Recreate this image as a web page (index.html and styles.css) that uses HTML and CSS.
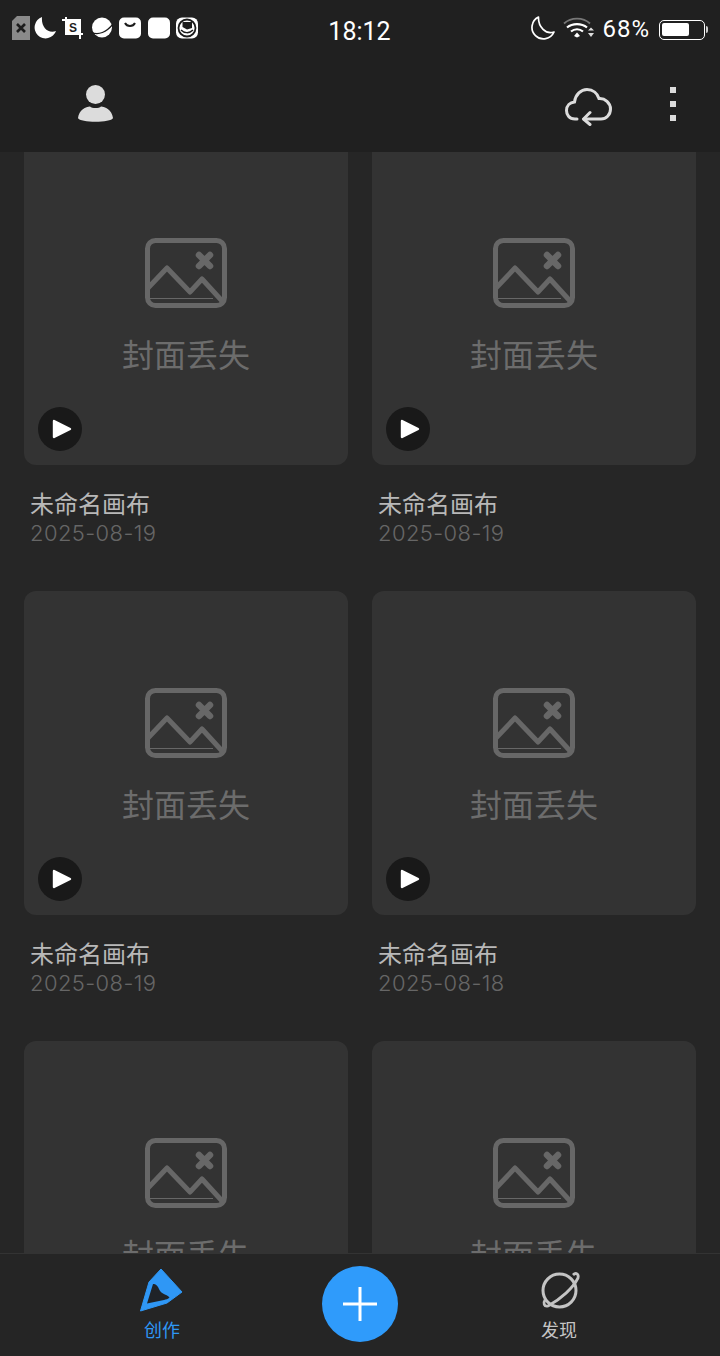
FILE: index.html
```html
<!DOCTYPE html>
<html lang="zh">
<head>
<meta charset="utf-8">
<title>画布</title>
<link rel="stylesheet" href="styles.css">
</head>
<body>
<svg class="defs" width="0" height="0" aria-hidden="true">
  <symbol id="cover" viewBox="0 0 82 70">
    <rect x="2.500" y="2.500" width="77" height="65" rx="8" fill="none" stroke="currentColor" stroke-width="5"/>
    <path d="M3 50 L22 30 L45 54 L57 41 L78 64" fill="none" stroke="currentColor" stroke-width="5" stroke-linejoin="round"/>
    <path d="M4 60.500 H68" stroke="currentColor" stroke-width="1.200"/>
    <path d="M54 17 L65 28 M65 17 L54 28" stroke="currentColor" stroke-width="6.500" stroke-linecap="round"/>
  </symbol>
  <symbol id="play" viewBox="0 0 44 44">
    <circle cx="22" cy="22" r="22" fill="#191919"/>
    <path d="M16 14 L32 22 L16 30 Z" fill="#fff" stroke="#fff" stroke-width="2.400" stroke-linejoin="round"/>
  </symbol>
</svg>

<div class="app">
  <header class="top">
    <div class="status">
      <div class="status-left">
        <svg class="ic-sim" viewBox="0 0 18 24"><path d="M5 0H18V24H0V5Z" fill="#8a8a8a"/><path d="M5 8L13 16M13 8L5 16" stroke="#1c1c1c" stroke-width="2.600"/></svg>
        <svg class="ic-s" viewBox="0 0 22 22"><path d="M8 0A11 11 0 1 0 22 14C14 17 7 10 8 0Z" fill="#fff"/></svg>
        <svg class="ic-s" viewBox="0 0 22 22"><path d="M4 0V17H21M0 3H18V22" fill="none" stroke="#fff" stroke-width="2"/><rect x="5" y="4" width="12" height="12" fill="#fff"/><text x="11" y="15" class="ic-letter">S</text></svg>
        <svg class="ic-s" viewBox="0 0 22 22"><circle cx="11" cy="10.500" r="10" fill="#fff"/><path d="M0 15C7 19 16 15 22 7" fill="none" stroke="#1c1c1c" stroke-width="1.300"/></svg>
        <svg class="ic-s" viewBox="0 0 22 22"><rect width="22" height="21" y="0.500" rx="5" fill="#fff"/><path d="M6 6C8 10 14 10 16 6" fill="none" stroke="#1c1c1c" stroke-width="2"/></svg>
        <svg class="ic-s" viewBox="0 0 22 22"><rect width="22" height="21" y="0.500" rx="5" fill="#fff"/></svg>
        <svg class="ic-s" viewBox="0 0 22 22"><rect width="22" height="21" y="0.500" rx="6" fill="#fff"/><circle cx="11" cy="11" r="8.500" fill="none" stroke="#1c1c1c" stroke-width="1.800"/><path d="M6.500 5H16V11L11 12.500L6.500 10Z" fill="#1c1c1c"/><path d="M5 13C8 16 13 17 17 13" fill="none" stroke="#1c1c1c" stroke-width="1.500"/></svg>
      </div>
      <div class="clock">18:12</div>
      <div class="status-right">
        <svg class="ic-moon" viewBox="0 0 24 24"><path d="M7.500 1A11.500 11.500 0 1 0 23 16C15 19 7 11 7.500 1Z" fill="none" stroke="#fff" stroke-width="1.700" stroke-linejoin="round"/></svg>
        <svg class="ic-wifi" viewBox="0 0 32 22">
          <path d="M1 6.500C8 0 20 0 27 6.500" fill="none" stroke="#777" stroke-width="1.800"/>
          <path d="M4 10.500C9.500 6 18.500 6 24 10.500" fill="none" stroke="#fff" stroke-width="2.200"/>
          <path d="M8 14.500C11.500 11.500 16.500 11.500 20 14.500" fill="none" stroke="#fff" stroke-width="2.200"/>
          <path d="M11 19L14 15.500L17 19L14 20.500Z" fill="#fff"/>
          <path d="M25 13.500L28 10.500L31 13.500ZM25 16L31 16L28 20Z" fill="#ddd"/>
        </svg>
        <span class="pct">68%</span>
        <span class="battery"><span class="battery-fill"></span></span>
      </div>
    </div>
    <nav class="toolbar">
      <svg class="ic-user" viewBox="0 0 35 39"><circle cx="17.500" cy="9.500" r="9.500" fill="#dcdcdc"/><path d="M0 33C1 25 8 21.500 12 21.500C14 23.500 21 23.500 23 21.500C27 21.500 34 25 35 33C33 38 2 38 0 33Z" fill="#dcdcdc"/></svg>
      <div class="toolbar-right">
        <svg class="ic-cloud" viewBox="0 0 47 38"><path d="M12 31H10C4 31 1.500 26.500 1.500 22.500C1.500 17.500 5 14.500 9.500 14C10.500 6.500 16 1.500 22 1.500C28 1.500 32.500 5.500 34 10.500C40 10 45.500 15 45.500 21C45.500 27 41 31 36 31H19" fill="none" stroke="#dcdcdc" stroke-width="3" stroke-linecap="round"/><path d="M25 24.500L18.500 31L25 36.500" fill="none" stroke="#dcdcdc" stroke-width="3" stroke-linecap="round" stroke-linejoin="round"/></svg>
        <div class="more"><i></i><i></i><i></i></div>
      </div>
    </nav>
  </header>

  <main class="scroller">
    <div class="grid">
      <article class="card">
        <div class="thumb"><svg class="cover-ic"><use href="#cover"/></svg><p class="lost">封面丢失</p><svg class="play"><use href="#play"/></svg></div>
        <h3 class="name">未命名画布</h3><p class="date">2025-08-19</p>
      </article>
      <article class="card">
        <div class="thumb"><svg class="cover-ic"><use href="#cover"/></svg><p class="lost">封面丢失</p><svg class="play"><use href="#play"/></svg></div>
        <h3 class="name">未命名画布</h3><p class="date">2025-08-19</p>
      </article>
      <article class="card">
        <div class="thumb"><svg class="cover-ic"><use href="#cover"/></svg><p class="lost">封面丢失</p><svg class="play"><use href="#play"/></svg></div>
        <h3 class="name">未命名画布</h3><p class="date">2025-08-19</p>
      </article>
      <article class="card">
        <div class="thumb"><svg class="cover-ic"><use href="#cover"/></svg><p class="lost">封面丢失</p><svg class="play"><use href="#play"/></svg></div>
        <h3 class="name">未命名画布</h3><p class="date">2025-08-18</p>
      </article>
      <article class="card">
        <div class="thumb"><svg class="cover-ic"><use href="#cover"/></svg><p class="lost">封面丢失</p></div>
      </article>
      <article class="card">
        <div class="thumb"><svg class="cover-ic"><use href="#cover"/></svg><p class="lost">封面丢失</p></div>
      </article>
    </div>
  </main>

  <footer class="tabs">
    <div class="tab tab-active">
      <svg class="tab-ic" viewBox="0 0 44 44"><path d="M21 1L42 24L27 35L0.500 43L9 14Z" fill="#2f97f5" stroke="#2f97f5" stroke-width="1" stroke-linejoin="round"/><path d="M13 16C15 15.500 17 17 18 19C19.500 22 20 24 23 25.500C25.500 27 28 27.500 29.500 29.500C28 31 26 31.500 24 32L7 35.500Z" fill="#1f2328"/></svg>
      <span class="tab-label">创作</span>
    </div>
    <div class="tab">
      <button class="add" type="button" aria-label="add"><svg viewBox="0 0 36 36"><path d="M18 1V35M1 18H35" stroke="#fff" stroke-width="3"/></svg></button>
    </div>
    <div class="tab tab-find">
      <svg class="tab-ic" viewBox="0 0 44 44"><circle cx="22.500" cy="22.500" r="16.500" fill="none" stroke="#c4c4c4" stroke-width="3"/><path d="M36 7C39 4 42 6 41 10C36 20 24 31 11 38C7 39 6 35 8 32" fill="none" stroke="#c4c4c4" stroke-width="2.800"/></svg>
      <span class="tab-label">发现</span>
    </div>
  </footer>
</div>
</body>
</html>
```

FILE: styles.css
```css
* { box-sizing: border-box; }
html, body { margin: 0; padding: 0; background: #262626; }
body { font-family: Roboto, "Noto Sans CJK SC", sans-serif; }
.defs { display: block; height: 0; }
p, h3 { margin: 0; font-weight: 400; }

.app { width: 720px; height: 1356px; display: flex; flex-direction: column; overflow: hidden; }

.top { height: 152px; flex: none; background: #202020; display: flex; flex-direction: column; }
.status { height: 56px; padding: 16px 15px 0 12px; display: grid; grid-template-columns: 1fr auto 1fr; align-items: start; color: #fff; }
.status-left { display: flex; align-items: center; gap: 6.400px; height: 24px; }
.status-left svg { display: block; flex: none; }
.ic-sim { width: 18px; height: 24px; margin-right: -2.400px; }
.ic-s { width: 22px; height: 22px; }
.ic-letter { font: 700 12px "Liberation Sans", sans-serif; fill: #1c1c1c; text-anchor: middle; }
.clock { font-size: 25px; line-height: 30px; width: 64px; text-align: center; margin: 1px 0 0 2px; }
.status-right { display: flex; align-items: center; justify-content: flex-end; height: 24px; }
.ic-moon { width: 24px; height: 24px; margin-right: 8px; }
.ic-wifi { width: 32px; height: 22px; margin-right: 7px; }
.pct { font-size: 24px; line-height: 28px; margin-right: 9px; margin-top: 2px; letter-spacing: 1px; }
.battery { width: 46px; height: 20px; border: 1.500px solid #fff; border-radius: 5px; padding: 2px; position: relative; display: block; margin-top: 4px; }
.battery::after { content: ""; position: absolute; right: -4px; top: 5px; width: 2px; height: 7px; background: #ccc; border-radius: 0 2px 2px 0; }
.battery-fill { display: block; width: 27px; height: 13px; background: #fff; border-radius: 2px; }

.toolbar { flex: 1; display: flex; align-items: flex-start; justify-content: space-between; padding: 29px 44px 0 78px; }
.ic-user { width: 35px; height: 39px; display: block; }
.toolbar-right { display: flex; align-items: flex-start; gap: 58px; padding-top: 3px; }
.ic-cloud { width: 47px; height: 38px; display: block; }
.more { display: flex; flex-direction: column; gap: 8px; margin-top: -1px; }
.more i { display: block; width: 6px; height: 6px; background: #dcdcdc; }

.scroller { flex: 1; min-height: 0; overflow: hidden; background: #262626; }
.grid { margin-top: -11px; padding: 0 24px; display: grid; grid-template-columns: 324px 324px; column-gap: 24px; }
.card { height: 450px; }
.thumb { position: relative; height: 324px; background: #333333; border-radius: 12px; padding-top: 97px; display: flex; flex-direction: column; align-items: center; }
.cover-ic { width: 82px; height: 70px; display: block; color: #676767; flex: none; }
.lost { margin-top: 23px; font-size: 32px; line-height: 44px; color: #6c6c6c; font-family: "Noto Sans CJK SC", sans-serif; }
.play { position: absolute; left: 14px; bottom: 14px; width: 44px; height: 44px; }
.name { margin-top: 23px; padding-left: 6px; font-size: 24px; line-height: 30px; color: #b8b8b8; font-family: "Noto Sans CJK SC", sans-serif; }
.date { margin-top: 1px; padding-left: 6px; font-family: Inter, sans-serif; font-size: 22px; font-weight: 300; letter-spacing: 0.400px; line-height: 28px; color: #666; }

.tabs { height: 103px; flex: none; background: #252525; border-top: 1px solid #333; padding: 0 63px; display: grid; grid-template-columns: repeat(3, 1fr); }
.tab { display: flex; flex-direction: column; align-items: center; padding-top: 14px; }
.tab-find { padding-left: 2px; }
.tab-ic { width: 44px; height: 44px; display: block; }
.tab-label { margin-top: 5px; font-size: 18px; line-height: 24px; color: #c4c4c4; font-family: "Noto Sans CJK SC", sans-serif; }
.tab-active .tab-label { color: #2f97f5; }
.add { width: 76px; height: 76px; margin: -2px 0 0; padding: 20px; border: 0; border-radius: 50%; background: #2f9bfb; display: block; }
.add svg { width: 36px; height: 36px; display: block; }
```
